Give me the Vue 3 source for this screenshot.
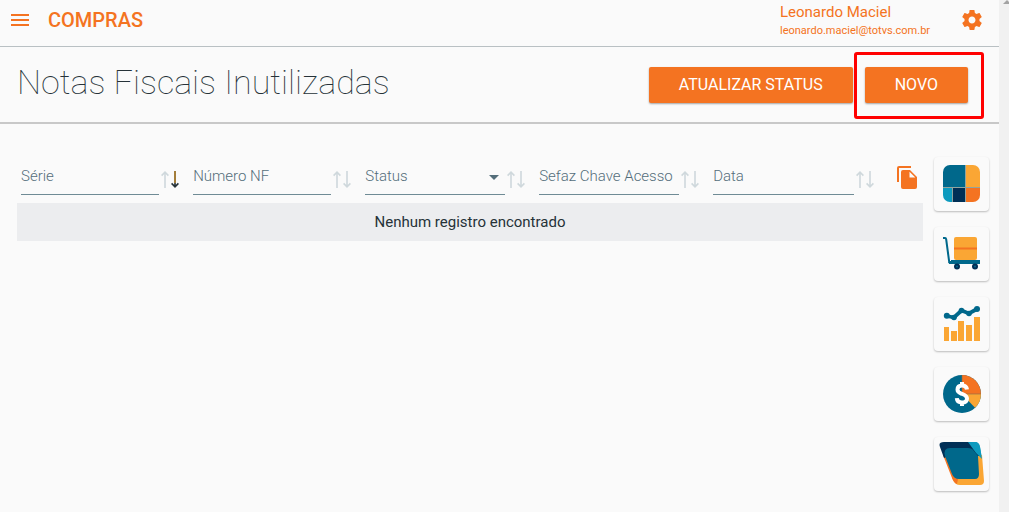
<script setup>
import { ref } from 'vue'

const columns = [
  { key: 'serie', label: 'Série', sort: 'desc' },
  { key: 'numero', label: 'Número NF' },
  { key: 'status', label: 'Status', select: true },
  { key: 'chave', label: 'Sefaz Chave Acesso' },
  { key: 'data', label: 'Data' },
]
const filters = ref({ serie: '', numero: '', status: '', chave: '', data: '' })
</script>

<template>
  <div class="page">
    <div class="content">
      <header class="topbar">
        <button class="icon-button" type="button" aria-label="Menu">
          <svg width="18" height="12" viewBox="0 0 18 12"><path d="M0 0h18v2H0zM0 5h18v2H0zM0 10h18v2H0z" fill="currentColor" /></svg>
        </button>
        <span class="module">COMPRAS</span>
        <div class="user">
          <span class="name">Leonardo Maciel</span>
          <span class="email">leonardo.maciel@totvs.com.br</span>
        </div>
        <button class="icon-button" type="button" aria-label="Configurações">
          <svg width="24" height="24" viewBox="0 0 24 24"><path fill="currentColor" d="M19.43 12.98c.04-.32.07-.64.07-.98s-.03-.66-.07-.98l2.11-1.65c.19-.15.24-.42.12-.64l-2-3.46c-.12-.22-.39-.3-.61-.22l-2.49 1c-.52-.4-1.08-.73-1.69-.98l-.38-2.65C14.46 2.18 14.25 2 14 2h-4c-.25 0-.46.18-.49.42l-.38 2.65c-.61.25-1.17.59-1.69.98l-2.49-1c-.23-.09-.49 0-.61.22l-2 3.46c-.13.22-.07.49.12.64l2.11 1.65c-.04.32-.07.65-.07.98s.03.66.07.98l-2.11 1.65c-.19.15-.24.42-.12.64l2 3.46c.12.22.39.3.61.22l2.49-1c.52.4 1.08.73 1.69.98l.38 2.65c.03.24.24.42.49.42h4c.25 0 .46-.18.49-.42l.38-2.65c.61-.25 1.17-.59 1.69-.98l2.49 1c.23.09.49 0 .61-.22l2-3.46c.12-.22.07-.49-.12-.64l-2.11-1.65zM12 15.5c-1.93 0-3.5-1.57-3.5-3.5s1.57-3.5 3.5-3.5 3.5 1.57 3.5 3.5-1.57 3.5-3.5 3.5z" /></svg>
        </button>
      </header>

      <div class="titlebar">
        <h1>Notas Fiscais Inutilizadas</h1>
        <button class="action" type="button">ATUALIZAR STATUS</button>
        <button class="action highlighted" type="button">NOVO</button>
      </div>

      <main class="body">
        <table>
          <colgroup>
            <col class="narrow" /><col class="narrow" /><col class="wide" /><col class="wide" /><col /><col class="tool" />
          </colgroup>
          <thead>
            <tr>
              <th v-for="col in columns" :key="col.key">
                <div class="filter">
                  <div v-if="col.select" class="field">
                    <select v-model="filters[col.key]" :aria-label="col.label">
                      <option value="">{{ col.label }}</option>
                    </select>
                    <svg class="caret" width="10" height="5" viewBox="0 0 10 5"><path d="M0 0h10L5 5z" fill="#546e7a" /></svg>
                  </div>
                  <div v-else class="field">
                    <input v-model="filters[col.key]" type="text" :placeholder="col.label" :aria-label="col.label" />
                  </div>
                  <button class="sort" type="button" :aria-label="'Ordenar por ' + col.label">
                    <svg width="19" height="17" viewBox="0 0 19 17" fill="none" stroke-width="1.6">
                      <path d="M4 17V1M.6 4.6 4 1.2l3.4 3.4" stroke="#cfd8dc" />
                      <path d="M14 0v16M10.600 12.400l3.400 3.400 3.400-3.400" :stroke="col.sort ? '#263238' : '#cfd8dc'" />
                      <path v-if="col.sort" d="M14 0v12" stroke="#b98732" />
                    </svg>
                  </button>
                </div>
              </th>
              <th>
                <button class="copy" type="button" aria-label="Copiar">
                  <svg width="20" height="23" viewBox="0 0 20 23" fill="currentColor"><path d="M14 0H2a2 2 0 0 0-2 2v14h2V2h12zM6 4h7l7 7v10a2 2 0 0 1-2 2H6a2 2 0 0 1-2-2V6a2 2 0 0 1 2-2zm6.500 1.700v5.800h5.800z" /></svg>
                </button>
              </th>
            </tr>
          </thead>
          <tbody>
            <tr><td colspan="6">Nenhum registro encontrado</td></tr>
          </tbody>
        </table>

        <nav class="apps" aria-label="Módulos">
          <button type="button" aria-label="Painel">
            <svg width="38" height="38" viewBox="0 0 38 38">
              <path d="M7 0h15v22H0V7a7 7 0 0 1 7-7z" fill="#00688b" />
              <path d="M23 0h7a7 7 0 0 1 7 7v15H23z" fill="#faa634" />
              <path d="M0 23h9v14H7a7 7 0 0 1-7-7z" fill="#0c9abe" />
              <path d="M10 23h12v14H10z" fill="#002f56" />
              <path d="M23 23h14v7a7 7 0 0 1-7 7h-7z" fill="#f47321" />
              <path d="M22.500 0v37M0 22.500h37M9.500 23v14" stroke="#668078" stroke-width="1" opacity=".7" />
            </svg>
          </button>
          <button type="button" aria-label="Compras">
            <svg width="38" height="38" viewBox="0 0 38 38">
              <rect x="11" y="2" width="23" height="23" rx="2" fill="#faa634" />
              <path d="M11 13.500h23" stroke="#f47321" stroke-width="2" />
              <path d="M0 3h2q1 0 1.200 1.500l3 22.500H37" fill="none" stroke="#00688b" stroke-width="2" />
              <path d="M8 25h29v4H6l-.5-2H8z" fill="#00688b" />
              <circle cx="14" cy="31.500" r="3" fill="#002f56" /><circle cx="32" cy="31.500" r="3" fill="#002f56" />
              <circle cx="14" cy="31.500" r="1" fill="#00688b" /><circle cx="32" cy="31.500" r="1" fill="#00688b" />
            </svg>
          </button>
          <button type="button" aria-label="Indicadores">
            <svg width="38" height="38" viewBox="0 0 38 38">
              <path d="M1 22h5v14H1zM8 26h6v10H8zM15 16h6v20h-6zM23 20h6v16h-6zM31 12h6v24h-6z" fill="#faa634" />
              <path d="m4 11 7 1.500L18.500 5.500l7.500 3L34 4" fill="none" stroke="#00688b" stroke-width="3.800" />
              <g fill="#00688b"><circle cx="3.800" cy="10.700" r="3" /><circle cx="11" cy="12.500" r="2.800" /><circle cx="18.500" cy="5.500" r="2.800" /><circle cx="26" cy="8.500" r="2.800" /><circle cx="34" cy="4" r="3" /></g>
            </svg>
          </button>
          <button type="button" aria-label="Financeiro">
            <svg width="38" height="38" viewBox="0 0 38 38">
              <circle cx="19" cy="19" r="19" fill="#00688b" />
              <path d="M19 0a19 19 0 0 1 19 19H19z" fill="#f47321" />
              <path d="M38 19a19 19 0 0 1-6 13.800L19 19z" fill="#faa634" />
              <path d="M19 0v19H38" fill="none" stroke="#806b50" stroke-width=".6" />
              <path d="M24 14.500Q23.500 10.500 19 10.500t-4.500 4c0 3 2.500 3.500 4.500 4.300s5 1.700 5 4.700-2 4-5 4-5-1-5.200-4.300M19 7v4M19 27v4" fill="none" stroke="#fff" stroke-width="4" />
            </svg>
          </button>
          <button type="button" aria-label="Gestão">
            <svg width="45" height="46" viewBox="0 0 45 46">
              <path d="M29 1h7q4 0 5 5l2 12-12-4z" fill="#0c9abe" />
              <path d="M36 14h7l2 26q0 4-4 4H21q-5 0-7-5l-1-2h20z" fill="#faa634" />
              <path d="M4 14h7l8 24-1 5q-3-1-5-6z" fill="#f47321" />
              <path d="M5 1h24q4 0 6 4l6 10-29-1-7 3L1 6Q-1 1 5 1z" fill="#002f56" />
              <path d="M29 1h7q4 0 5 5l2 12-6-6z" fill="#0c9abe" />
              <path d="M11 7h18q4 0 6 3l4 5 1 18q0 5-4 5H20q-5 0-7-5L6 15q-2-8 5-8z" fill="#00688b" />
            </svg>
          </button>
        </nav>
      </main>
    </div>
    <div class="scrollbar">
      <svg width="8" height="5" viewBox="0 0 8 5"><path d="M0 4 4 0l4 4z" fill="#a3a3a3" /></svg>
    </div>
  </div>
</template>

<style>
html, body { margin: 0; background: #fafafa; }
</style>

<style scoped>
* { box-sizing: border-box; }
.page { display: flex; min-height: 100vh; font-family: Roboto, "Liberation Sans", sans-serif; color: #263238; }
.content { flex: 1; min-width: 0; }
.scrollbar { width: 10px; background: #f1f1f1; overflow: hidden; padding-left: 4px; line-height: 0; }
button { font: inherit; border: 0; padding: 0; background: none; cursor: pointer; }
svg { display: block; }
.topbar { display: flex; align-items: center; height: 47px; padding: 0 15px 7px 11px; border-bottom: 1px solid #b9c0c3; color: #f47321; }
.icon-button { color: #f47321; }
.module { flex: 1; margin-left: 19px; font-size: 20px; font-weight: 500; line-height: 24px; }
.user { display: flex; flex-direction: column; width: 180px; padding-top: 3px; }
.name { font-size: 15px; line-height: 20px; }
.email { font-size: 11px; line-height: 18px; }
.titlebar { display: flex; align-items: center; height: 77px; padding: 0 31px 0 17px; border-bottom: 2px solid #c8c8c8; }
h1 { flex: 1; margin: 0 0 5px; font-size: 34px; font-weight: 100; line-height: 42px; }
.action { position: relative; height: 36px; padding: 0 30px; border-radius: 2px; background: #f47321; color: #fff; font-size: 16px; font-weight: 400; box-shadow: 0 1px 2px rgba(0, 0, 0, .35); }
.highlighted { margin-left: 12px; }
.highlighted::after { content: ""; position: absolute; inset: -15px -16px -16px -11px; border: 3px solid #f00; border-radius: 3px; }
.body { display: flex; align-items: flex-start; gap: 11px; padding: 33px 10px 0 17px; }
table { flex: 1; min-width: 0; margin-top: 1px; table-layout: fixed; border-collapse: collapse; }
.narrow { width: 19%; }
.wide { width: 19.2%; }
.tool { width: 39px; }
th { padding: 0 0 8px; vertical-align: top; font-weight: 300; }
.filter { display: flex; align-items: flex-end; padding-left: 4px; }
.field { position: relative; flex: 1; min-width: 0; }
input, select { display: block; width: 100%; height: 37px; padding: 0; border: 0; border-bottom: 1px solid #6f8b95; border-radius: 0; background: none; outline: 0; appearance: none; font: inherit; font-size: 15px; color: #546e7a; }
input::placeholder { color: #546e7a; opacity: 1; }
.caret { position: absolute; right: 6px; top: 17px; pointer-events: none; }
.sort { width: 30px; padding: 0 0 7px 2px; }
.copy { display: block; margin: 8px 0 0 13px; color: #f47321; }
td { height: 38px; padding: 0; background: #ecedef; text-align: center; font-size: 15px; }
.apps { display: flex; flex-direction: column; gap: 16px; width: 55px; }
.apps button { display: grid; place-items: center; height: 54px; border-radius: 4px; box-shadow: 0 1px 2px rgba(0, 0, 0, .25); }
</style>
